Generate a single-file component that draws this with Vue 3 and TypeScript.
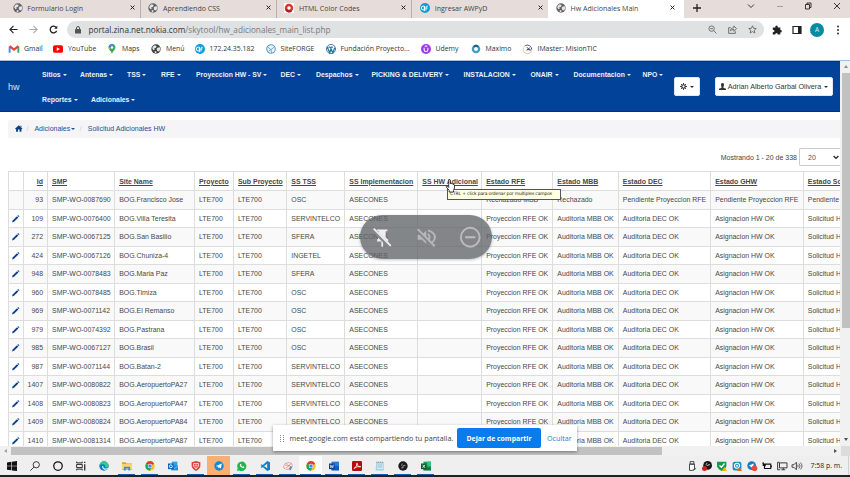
<script setup lang="ts">
interface Tab { title: string; icon: string; active?: boolean }
interface TaskItem { icon: string; state?: string; open?: boolean }
interface Column { label: string; width: number }

const globe = '<circle cx="8" cy="8" r="7.5" fill="#5f6368"/><path d="M3 4l3-2 3 1-1 3-3 1 1 2-2 1-2-3zM10 6l4-1 1 3-2 4-3-1-1-3zM6 11l3 1-1 3-2-1z" fill="#e8e4e2"/>'
const chrome = '<circle cx="8" cy="8" r="7.5" fill="#fbc116"/><path d="M8 8L1.5 4.3A7.5 7.5 0 0 1 14.5 4.3Z" fill="#e33b2e"/><path d="M8 8L1.5 4.3A7.5 7.5 0 0 0 7.5 15.5L11 10Z" fill="#1da462"/><path d="M1.5 4.3A7.5 7.5 0 0 1 14.5 4.3H8z" fill="#e33b2e"/><circle cx="8" cy="8" r="3.6" fill="#fff"/><circle cx="8" cy="8" r="2.8" fill="#4285f4"/>'
const zinaLogo = '<circle cx="8" cy="8" r="8" fill="#0a9fd8"/><path d="M7 5H5a2 2 0 0 0 0 6h2V5v8M9.500 12V7q0-2 3-2M9 8h3" stroke="#fff" stroke-width="1.500" fill="none"/>'

const icons: Record<string, string> = {
  globe,
  globeDark: globe.replace('#5f6368', '#3c4043'),
  chrome,
  zinaLogo,
  htmlCodes: '<rect width="16" height="16" fill="#fff"/><circle cx="8" cy="8" r="4.800" fill="none" stroke="#d9382a" stroke-width="4"/><path d="M3.500 10.500a5 5 0 0 0 8 1.500" stroke="#a3211a" stroke-width="3.500" fill="none"/>',
  gmail: '<path d="M1 14V4" stroke="#4285f4" stroke-width="3"/><path d="M15 14V4" stroke="#34a853" stroke-width="3"/><path d="M1 3.500L8 9l7-5.500" fill="none" stroke="#ea4335" stroke-width="3.500"/>',
  youtube: '<rect y="2" width="16" height="12" rx="3" fill="#f00"/><path d="M6 5l5 3-5 3z" fill="#fff"/>',
  maps: '<path d="M8 0a5.500 5.500 0 0 0-5.500 6C3 10 7 11 8 16c1-5 5-6 5.500-10A5.500 5.500 0 0 0 8 0z" fill="#34a853"/><path d="M3.500 2.500A5.500 5.500 0 0 1 11 1L4 9Q2 6 3.500 2.500z" fill="#4285f4"/><path d="M3 4l3 2-2 3Q2 6 3 4z" fill="#fbbc04"/><path d="M3.500 2.500L6 5l-3 1q-.5-2 .5-3.500z" fill="#ea4335"/><circle cx="8" cy="5.500" r="2" fill="#fff"/>',
  siteforge: '<circle cx="8" cy="8" r="6.800" fill="#eef5fb" stroke="#5b9ac7" stroke-width="1.700"/><path d="M3 5l5 4 5-4M8 9l1 5M4 11l4-2" stroke="#6aa7cf" stroke-width="1.500" fill="none"/>',
  wordpress: '<circle cx="8" cy="8" r="7.300" fill="#fff" stroke="#21759b" stroke-width="1.400"/><path d="M2 5l4 9 2-6 3 6 3-8M4 5h3M8 5h3M7 5l3 8" stroke="#21759b" stroke-width="2" fill="none"/>',
  udemy: '<circle cx="8" cy="8" r="8" fill="#a435f0"/><path d="M5 6v3a3 3 0 0 0 6 0V6M6 4l2-1 2 1" fill="none" stroke="#fff" stroke-width="1.700"/>',
  maximo: '<circle cx="8" cy="8" r="5" fill="none" stroke="#3f9ac4" stroke-width="3.600"/><path d="M4.500 4.500a5 5 0 0 1 7 0" stroke="#1d5f86" stroke-width="3" fill="none"/>',
  imaster: '<path d="M3 3a7 7 0 0 1 11 6" fill="none" stroke="#4a4f73" stroke-width="1.500"/><path d="M14 10A7 7 0 1 1 3 3" fill="none" stroke="#e8b88c" stroke-width="1.300"/><path d="M6 5l6 6M11 6l-5 4M6 9h6" stroke="#4a4f73" stroke-width="1.600"/>',
  windows: '<path d="M0 2.200l7-1V7.500H0zM8 1l8-1v7.500H8zM0 8.500h7v6.300l-7-1zM8 8.500h8V16l-8-1z" fill="#111"/>',
  search: '<circle cx="10" cy="6" r="5" fill="none" stroke="#222" stroke-width="1.400"/><path d="M6.300 9.700L.5 15.500" stroke="#222" stroke-width="1.400"/>',
  cortana: '<circle cx="8" cy="8" r="6.800" fill="none" stroke="#111" stroke-width="2"/>',
  taskview: '<path d="M1 1v2h9V1M1 15v-2h9v2M1 5.500h9v5H1z" fill="none" stroke="#111" stroke-width="1.400"/><path d="M14 1v2M14 5v10" stroke="#111" stroke-width="1.800"/>',
  edge: '<circle cx="8" cy="8" r="7.500" fill="#0b7ec2"/><path d="M.8 7C2-2 15-1 15.500 7c0 4-6 4-6 2 1-1 0-4-3-4Q2 5 .8 7z" fill="#3cc98e"/><path d="M6 8c-1 5 4 6 8 4" stroke="#e9f8fb" stroke-width="1.800" fill="none"/>',
  folder: '<path d="M0 2h6l1.500 2H16v10H0z" fill="#e3a51c"/><path d="M0 5h16v8H0z" fill="#ffd76b"/><path d="M3 15V9h10v6h-3v-3H6v3z" fill="#3b8ed2"/>',
  outlook: '<path d="M6 1h9v10H6z" fill="#28a8ea"/><path d="M5 7h11v8H5z" fill="#1490df"/><path d="M5 8l6 4 5-4" stroke="#8fd3f8" fill="none"/><path d="M0 4h9v9H0z" fill="#0364b8"/><circle cx="4.500" cy="8.500" r="2.300" fill="none" stroke="#fff" stroke-width="1.500"/>',
  brave: '<path d="M1 2l7-2 7 2v6q-1 5-7 8-6-3-7-8z" fill="#d5433c"/><path d="M4 4h8v4l-4 5-4-5z" fill="none" stroke="#ffd8d4" stroke-width="1.400"/><path d="M5 7h6M8 4v8" stroke="#ffd8d4"/>',
  telegram: '<circle cx="8" cy="8" r="7.500" fill="#168acd"/><path d="M3 8l9.500-4-1.500 8-3-2-1.500 1.500V9z" fill="#fff"/>',
  whatsapp: '<path d="M0 16l1-4A7.500 7.500 0 1 1 4 15z" fill="#21b84b"/><path d="M5 4.500q-2 5 5.500 7l1.500-2-2-1.200-1 1Q7 8.500 6.500 7l1-1z" fill="#fff"/>',
  vscode: '<path d="M11.500 0L16 2v12l-4.500 2L1 6.500 2.500 5l9 6.500v-7l-9 6.500L1 9.500z" fill="#1580c8"/>',
  draw: '<ellipse cx="8" cy="8" rx="7" ry="5" fill="#fff0ee" stroke="#df9e98" stroke-width="1.500" transform="rotate(-20 8 8)"/><path d="M4 8q2-4 4-1t4-3M5 11l5-4" stroke="#d97d75" stroke-width="1.300" fill="none"/><path d="M11 8l4 1-3 6-2-2z" fill="#4c92bd"/>',
  word: '<path d="M4 1h12v14H4z" fill="#2b7cd3"/><path d="M4 8h12v7H4z" fill="#185abd"/><path d="M0 4h9v9H0z" fill="#103f91"/><path d="M2 6l1 5 1.500-4L6 11l1-5" stroke="#fff" fill="none"/>',
  acrobat: '<rect width="16" height="16" rx="2" fill="#b50d0d"/><path d="M3 12q5-3 5-8 0-2 0 0 1 6 6 5-6-1-11 3z" fill="none" stroke="#fff" stroke-width="1.300"/>',
  notepad: '<path d="M2 2h12v13H1z" fill="#9dcfdf"/><path d="M3 4h10v9H3z" fill="#d6edf2"/><path d="M4 6h8M4 8h8M4 10h8" stroke="#86b9c9"/><path d="M3 1v2M6 1v2M9 1v2M12 1v2" stroke="#666"/>',
  obs: '<circle cx="8" cy="8" r="7.500" fill="#1b1b1d"/><path d="M7 4q-3 3 1 5M12 7q-4-1-4 2M5 11q4 1 4-2" stroke="#b4b4b4" stroke-width="1.200" fill="none"/>',
  excel: '<path d="M4 1h12v14H4z" fill="#21a366"/><path d="M10 1h6v7h-6z" fill="#33c481"/><path d="M4 10h12v5H4z" fill="#107c41"/><path d="M0 4h9v9H0z" fill="#0b5a2f"/><path d="M2.500 6l4 5M6.500 6l-4 5" stroke="#fff" stroke-width="1.300"/>',
  usb: '<path d="M5 1h6v4H5zM4 5h8v8a3 3 0 0 1-3 2H4z" fill="#fafafa" stroke="#333" stroke-width="1.400"/><path d="M9 14q5 1 5-3" stroke="#333" fill="none"/>',
  obsRec: '<circle cx="9" cy="7" r="7" fill="#171717"/><path d="M8 3q-3 3 1 5M13 6q-4-1-4 2" stroke="#ddd" stroke-width="1.300" fill="none"/><circle cx="4" cy="12" r="4" fill="#d71c1c"/>',
  shieldOk: '<path d="M0 1h15v7q-1 5-7.500 8Q1 13 0 8z" fill="#15994b"/><path d="M4 7l3 3 5-6" stroke="#fff" stroke-width="2" fill="none"/><path d="M12 9l4 7H8z" fill="#f4b400"/>',
  remote: '<rect x="1" y="1" width="14" height="14" rx="3" fill="#1794b4"/><circle cx="8" cy="7.500" r="4" fill="none" stroke="#fff" stroke-width="1.800"/><circle cx="8" cy="7.500" r="1.500" fill="#fff"/><path d="M12 9l4 7H8z" fill="#ef6030"/>',
  telegramBadge: '<circle cx="7.500" cy="7.500" r="7" fill="#1680bd"/><path d="M3 7l8-3-2 7-3-2z" fill="#fff"/><circle cx="12" cy="11.500" r="4.500" fill="#e84936"/>',
  battery: '<path d="M4 5h10v7H4zM15 7v3M1 3l4 6M2 2v5h4" fill="none" stroke="#111" stroke-width="1.800"/>',
  network: '<path d="M4 3h12v8H4zM10 11v3M7 14h6M1 2v12h4M1 2h3" fill="none" stroke="#222" stroke-width="1.400"/>',
  speaker: '<path d="M0 6h3l4-4v12l-4-4H0z" fill="none" stroke="#222" stroke-width="1.300"/><path d="M9 6q2 2 0 4M11 4q4 4 0 8M13.500 2.500q5 5.500 0 11" stroke="#333" stroke-width="1.200" fill="none"/>',
}

const tabs: Tab[] = [
  { title: 'Formulario Login', icon: 'globe' },
  { title: 'Aprendiendo CSS', icon: 'globe' },
  { title: 'HTML Color Codes', icon: 'htmlCodes' },
  { title: 'Ingresar AWPyD', icon: 'zinaLogo' },
  { title: 'Hw Adicionales Main', icon: 'globe', active: true },
]

const bookmarks: Tab[] = [
  { title: 'Gmail', icon: 'gmail' },
  { title: 'YouTube', icon: 'youtube' },
  { title: 'Maps', icon: 'maps' },
  { title: 'Menú', icon: 'globeDark' },
  { title: '172.24.35.182', icon: 'zinaLogo' },
  { title: 'SiteFORGE', icon: 'siteforge' },
  { title: 'Fundación Proyecto...', icon: 'wordpress' },
  { title: 'Udemy', icon: 'udemy' },
  { title: 'Maximo', icon: 'maximo' },
  { title: 'IMaster: MisionTIC', icon: 'imaster' },
]

const menu = ['Sitios', 'Antenas', 'TSS', 'RFE', 'Proyeccion HW - SV', 'DEC', 'Despachos', 'PICKING & DELIVERY', 'INSTALACION', 'ONAIR', 'Documentacion', 'NPO']
const submenu = ['Reportes', 'Adicionales']

const columns: Column[] = [
  { label: '', width: 15.5 },
  { label: 'Id', width: 24 },
  { label: 'SMP', width: 67.2 },
  { label: 'Site Name', width: 79.8 },
  { label: 'Proyecto', width: 39 },
  { label: 'Sub Proyecto', width: 53.3 },
  { label: 'SS TSS', width: 58 },
  { label: 'SS Implementacion', width: 73 },
  { label: 'SS HW Adicional', width: 63.900 },
  { label: 'Estado RFE', width: 71.2 },
  { label: 'Estado MBB', width: 65.5 },
  { label: 'Estado DEC', width: 92.3 },
  { label: 'Estado GHW', width: 92.6 },
  { label: 'Estado Solicitud', width: 90 },
]
const gridColumns = columns.map((c) => c.width + 'px').join(' ')

const sites: [string, string, string, string][] = [
  ['93', '0087690', 'Francisco Jose', 'OSC'],
  ['109', '0076400', 'Villa Teresita', 'SERVINTELCO'],
  ['272', '0067125', 'San Basilio', 'SFERA'],
  ['424', '0067126', 'Chuniza-4', 'INGETEL'],
  ['948', '0078483', 'Maria Paz', 'SFERA'],
  ['960', '0078485', 'Timiza', 'OSC'],
  ['969', '0071142', 'El Remanso', 'OSC'],
  ['979', '0074392', 'Pastrana', 'OSC'],
  ['985', '0067127', 'Brasil', 'OSC'],
  ['987', '0071144', 'Batan-2', 'SERVINTELCO'],
  ['1407', '0080822', 'AeropuertoPA27', 'SERVINTELCO'],
  ['1408', '0080823', 'AeropuertoPA47', 'SERVINTELCO'],
  ['1409', '0080824', 'AeropuertoPA84', 'SERVINTELCO'],
  ['1410', '0081314', 'AeropuertoPA87', 'SERVINTELCO'],
]
const rows = sites.map(([id, smp, site, tss], i) => {
  const states = i === 0
    ? ['Rechazado MBB', 'Rechazado', 'Pendiente Proyeccion RFE', 'Pendiente Proyeccion RFE', 'Pendiente Proyeccion']
    : ['Proyeccion RFE OK', 'Auditoria MBB OK', 'Auditoria DEC OK', 'Asignacion HW OK', 'Solicitud HW OK']
  return { editable: i > 0, cells: [id, 'SMP-WO-' + smp, 'BOG.' + site, 'LTE700', 'LTE700', tss, 'ASECONES', '', ...states] }
})

const tasks: TaskItem[] = [
  { icon: 'windows' }, { icon: 'search' }, { icon: 'cortana' }, { icon: 'taskview' }, { icon: 'edge' },
  { icon: 'folder', open: true }, { icon: 'chrome', open: true }, { icon: 'outlook' },
  { icon: 'brave', open: true }, { icon: 'telegram', state: 'alert' }, { icon: 'whatsapp', open: true },
  { icon: 'vscode', open: true }, { icon: 'draw', open: true }, { icon: 'chrome', state: 'current', open: true },
  { icon: 'word', open: true }, { icon: 'acrobat', open: true }, { icon: 'notepad', open: true },
  { icon: 'obs', open: true }, { icon: 'excel', open: true },
]
const tray = ['usb', 'obsRec', 'shieldOk', 'remote', 'telegramBadge', 'battery', 'network', 'speaker']
</script>

<template>
  <div class="screen">
    <header class="tabstrip">
      <div v-for="t in tabs" :key="t.title" class="tab" :class="{ active: t.active }">
        <svg class="ic" viewBox="0 0 16 16" v-html="icons[t.icon]" />
        <span class="tab-title">{{ t.title }}</span>
        <svg class="x" viewBox="0 0 6 6"><path d="M.7.7l4.600 4.600M5.300.7L.7 5.300" /></svg>
      </div>
      <svg class="plus" viewBox="0 0 8 8"><path d="M4 0v8M0 4h8" /></svg>
      <div class="window-buttons">
        <svg viewBox="0 0 8 8"><path d="M1 2.500l3 3 3-3" /></svg>
        <svg viewBox="0 0 8 8"><path d="M1 4.500h6" stroke="#999" /></svg>
        <svg viewBox="0 0 8 8"><path d="M1.500 2.500h4v4.500h-4zM3 2.500V1h4v4.500H5.500" /></svg>
        <svg viewBox="0 0 8 8"><path d="M1 1l6 6M7 1L1 7" /></svg>
      </div>
    </header>

    <div class="toolbar">
      <svg class="nav-ic" viewBox="0 0 10 10"><path d="M9.500 5H1M5 1L1 5l4 4" stroke="#222" /></svg>
      <svg class="nav-ic" viewBox="0 0 10 10"><path d="M.5 5H9M5 1l4 4-4 4" stroke="#aaa" /></svg>
      <svg class="nav-ic" viewBox="0 0 10 10"><path d="M8.500 6.300A3.700 3.700 0 1 1 8 2.800" stroke="#222" stroke-width="1.400" /><path d="M9.200.8v3.500H5.700z" fill="#222" /></svg>
      <div class="omnibox">
        <svg class="lock" viewBox="0 0 6 8"><path d="M1.500 3.500V2a1.500 1.500 0 0 1 3 0v1.500" fill="none" stroke="#555" /><rect y="3" width="6" height="4.500" rx=".6" fill="#555" /></svg>
        <span class="url"><b>portal.zina.net.nokia.com</b>/skytool/hw_adicionales_main_list.php</span>
        <div class="omni-actions">
          <svg viewBox="0 0 10 10"><circle cx="4" cy="4" r="3" /><path d="M6.200 6.200L9.300 9.300M2.500 4h3" /></svg>
          <svg viewBox="0 0 10 10"><path d="M3 3H.7v6.300h7.500V7M2.500 6.500q.5-3.500 4-3.500V1l3 3-3 3V5Q4 5 2.500 6.500z" /></svg>
          <svg viewBox="0 0 10 10"><path d="M5 .9l1.200 2.800 3 .2-2.300 2 .7 3L5 7.300 2.400 8.900l.7-3-2.300-2 3-.2z" /></svg>
        </div>
      </div>
      <svg class="t-ic" viewBox="0 0 10 10"><path d="M.8 2.500h2.500Q3 .5 4.500.5T5.800 2.500h2.500V5q1.500-.2 1.500 1.200T8.300 7.500v2H5.800q0-1.500-1.300-1.500T3.300 9.500H.8V7.200Q2.500 7 2.500 6T.8 4.800z" fill="#222" /></svg>
      <svg class="t-ic" viewBox="0 0 10 10"><path d="M1 1.500h8v7H1zM7.500 1.500v7" fill="none" stroke="#222" stroke-width="1.200" /><path d="M6 1.500h3v7H6z" fill="#222" /></svg>
      <span class="avatar">A</span>
      <svg class="dots" viewBox="0 0 4 10"><circle cx="2" cy="1.500" r="1" /><circle cx="2" cy="5" r="1" /><circle cx="2" cy="8.500" r="1" /></svg>
    </div>

    <div class="bookmarks">
      <div v-for="b in bookmarks" :key="b.title" class="bookmark">
        <svg class="ic" viewBox="0 0 16 16" v-html="icons[b.icon]" />
        <span>{{ b.title }}</span>
      </div>
    </div>

    <div class="viewport">
      <main class="page">
        <nav class="navbar">
          <span class="brand">hw</span>
          <div class="menus">
            <div class="menu"><a v-for="m in menu" :key="m">{{ m }}<i class="caret" /></a></div>
            <div class="menu second"><a v-for="m in submenu" :key="m">{{ m }}<i class="caret" /></a></div>
          </div>
          <button class="btn gear">
            <svg viewBox="0 0 12 12"><circle cx="6" cy="6" r="3" fill="none" stroke="#333" stroke-width="2" /><path d="M6 0v3M6 9v3M0 6h3M9 6h3M1.800 1.800l2 2M8.200 8.200l2 2M10.200 1.800l-2 2M3.800 8.200l-2 2" stroke="#333" stroke-width="1.600" /></svg><i class="caret" />
          </button>
          <button class="btn user">
            <svg viewBox="0 0 12 12"><path d="M6 0c2 0 2.700 1.500 2.500 3.500S7.500 7 7.500 8L12 10v2H0v-2l4.500-2c0-1-.8-2.500-1-4.500S4 0 6 0z" fill="#333" /></svg>
            <span>Adrian Alberto Garbal Olivera</span><i class="caret" />
          </button>
        </nav>

        <div class="breadcrumb">
          <svg viewBox="0 0 14 12"><path d="M7 0l7 6.500-1 1L12 6.700V12H8.500V8h-3v4H2V6.700L1 7.500l-1-1zM10 1h2v3l-2-2z" fill="#0a3f8c" /></svg>
          <span class="slash">/</span><a>Adicionales<i class="caret" /></a>
          <span class="slash">/</span><a>Solicitud Adicionales HW</a>
        </div>

        <div class="pager">
          <span>Mostrando 1 - 20 de 338</span>
          <div class="select"><span>20</span><svg viewBox="0 0 6 5"><path d="M.6 1l2.400 2.400L5.400 1" fill="none" stroke="#222" stroke-width="1.300" /></svg></div>
        </div>

        <div class="table">
          <div class="tr head" :style="{ gridTemplateColumns: gridColumns }">
            <div v-for="(c, i) in columns" :key="i" class="td" :class="{ num: i === 1 }"><span>{{ c.label }}</span></div>
          </div>
          <div v-for="r in rows" :key="r.cells[0]" class="tr" :style="{ gridTemplateColumns: gridColumns }">
            <div class="td edit"><svg v-if="r.editable" viewBox="0 0 8 8"><path d="M0 8l.7-2.200L5.300 1.200l1.500 1.500L2.200 7.300z" fill="#0b408d" /><path d="M5.800.7l.7-.7L8 1.500l-.7.700z" fill="#0b408d" /></svg></div>
            <div v-for="(c, i) in r.cells" :key="i" class="td" :class="{ num: i === 0 }"><span>{{ c }}</span></div>
          </div>
        </div>
      </main>
      <aside class="vscroll"><i class="up" /><div class="vthumb" /><i class="down" /></aside>
    </div>
    <div class="hscroll"><i class="left" /><div class="hthumb" /><i class="right" /><div class="corner" /></div>

    <footer class="taskbar">
      <div v-for="(t, i) in tasks" :key="i" class="task" :class="[t.state, { open: t.open }]">
        <svg viewBox="0 0 16 16" v-html="icons[t.icon]" />
      </div>
      <div class="tray">
        <svg v-for="t in tray" :key="t" viewBox="0 0 16 16" v-html="icons[t]" />
        <time>7:58 p. m.</time>
      </div>
    </footer>

    <div class="tooltip">CTRL + click para ordenar por multiples campos</div>
    <svg class="cursor" viewBox="0 0 10 14"><path d="M3.200 8.500V1.300q.8-1.300 1.600 0v3.500l.3-.6q.9-.3 1.200.7.900-.5 1.300.5 1.200-.3 1.400.8V9L8 11.500V13H3.700v-1.500L.6 7.800q.5-1.300 1.500-.4z" fill="#fff" stroke="#111" stroke-width=".8" /></svg>

    <div class="pip">
      <svg viewBox="0 0 24 24"><path d="M6 3h12v2h-2v7l3 3v2h-6v6h-2v-6H6v-2l2-3V5H6z" fill="#eee" /><path d="M1 3l20 20" stroke="#85888b" stroke-width="4.500" /><path d="M2 2l20 20" stroke="#eee" stroke-width="2.200" /></svg>
      <svg viewBox="0 0 24 24"><path d="M2 9h5l5-5v16l-5-5H2z" fill="#b5b7b9" /><path d="M14 8q4 4 0 8M14 4q9 3 8 9-1 5-7 7" fill="none" stroke="#b5b7b9" stroke-width="2.300" /><path d="M1 4l20 20" stroke="#85888b" stroke-width="3" /><path d="M2 2.500l20 20" stroke="#b5b7b9" stroke-width="2.200" /></svg>
      <svg viewBox="0 0 24 24"><circle cx="12" cy="12" r="11" fill="none" stroke="#b9bbbd" stroke-width="2.300" /><path d="M6 12h12" stroke="#b9bbbd" stroke-width="2.500" /></svg>
    </div>

    <div class="share">
      <i class="grip" />
      <span class="share-text">meet.google.com está compartiendo tu pantalla.</span>
      <button class="stop">Dejar de compartir</button>
      <a class="hide">Ocultar</a>
    </div>
  </div>
</template>

<style>
body { margin: 0; overflow: hidden; }
</style>

<style scoped>
.screen { position: relative; width: 850px; height: 477px; overflow: hidden; background: #fff; display: flex; flex-direction: column; font-family: "Open Sans", "Noto Sans", sans-serif; color: #333; }
.screen * { box-sizing: border-box; }
svg { display: block; flex: none; overflow: visible; }
span, a { white-space: nowrap; }
.ic { width: 10px; height: 10px; }
.tabstrip { height: 18px; flex: none; display: flex; background: #e6dcd9; padding-left: 5px; font-size: 7.050px; color: #444; }
.tab { width: 135.800px; height: 18px; display: flex; align-items: center; padding: 0 5px 3px 7.500px; border-right: 1px solid #b9b1af; gap: 4.800px; }
.tab-title { flex: 1; line-height: 10px; }
.tab:nth-child(4) { border-right: 0; }
.tab.active { background: #fff; border: 0; padding-right: 9px; }
.x { width: 5px; height: 5px; stroke: #222; stroke-width: 1.200; }
.plus { width: 8px; height: 8px; margin: 3.500px 0 0 9px; stroke: #222; stroke-width: 1.300; }
.window-buttons { margin-left: auto; display: flex; gap: 20.600px; padding: 1.500px 9px 0 0; }
.window-buttons svg { width: 8px; height: 8px; fill: none; stroke: #222; stroke-width: .9; }
.toolbar { height: 22px; flex: none; display: flex; align-items: center; padding: 1px 10px 0 9px; }
.nav-ic { width: 9px; height: 9px; margin-right: 11px; fill: none; stroke-width: 1.200; }
.nav-ic:nth-child(3) { margin-right: 9px; }
.omnibox { width: 697px; height: 17px; margin-right: 8px; border-radius: 9px; background: #dfe1e3; display: flex; align-items: center; padding: 0 7px 0 8px; }
.lock { width: 6px; height: 8px; margin-right: 7.500px; }
.url { font-size: 8.200px; line-height: 12px; color: #777b80; }
.url b { font-weight: 400; color: #333; }
.omni-actions { margin-left: auto; display: flex; gap: 11px; }
.omni-actions svg { width: 9px; height: 9px; fill: none; stroke: #666; stroke-width: 1; }
.t-ic { width: 10px; height: 10px; margin-right: 10px; }
.avatar { width: 14px; height: 14px; border-radius: 50%; background: #078ba3; color: #d9f4f7; font-size: 6.500px; line-height: 14px; text-align: center; margin-right: 12px; margin-left: -2px; }
.dots { width: 4px; height: 10px; fill: #333; }
.bookmarks { height: 20px; flex: none; padding: 0 0 2px 9px; display: grid; grid-template-columns: 44px 54px 44px 43.500px 71px 60px 95px 50px 52px 90px; align-items: center; font-size: 6.900px; color: #333; }
.bookmark { display: flex; align-items: center; gap: 5px; line-height: 10px; }
.viewport { height: 386px; flex: none; display: flex; border-top: 1px solid #a9bede; font-family: "Liberation Sans", Arial, sans-serif; }
.page { width: 840px; overflow: hidden; }
.caret { display: inline-block; border: 2px solid transparent; border-top-color: currentColor; border-bottom: 0; margin-left: 2px; vertical-align: 1px; }
.navbar { height: 51px; background: #024298; border-top: 1px solid #01337f; border-bottom: 1px solid #01337f; display: flex; align-items: center; color: #fff; }
.brand { width: 42px; padding-left: 8px; font-size: 9px; color: #dce8f8; }
.menus { width: 631.500px; align-self: stretch; padding-top: 7px; font-size: 6.850px; font-weight: 700; color: #eaf1fa; }
.menu { display: grid; grid-template-columns: 38px 47px 34px 35px 84.500px 35.500px 55.500px 92px 67px 43px 69px 30px; height: 25px; line-height: 12px; }
.menu.second { grid-template-columns: 49px 60px; }
.btn { flex: none; height: 19px; background: #fff; border: 1px solid #e3e8f0; border-radius: 2px; display: flex; align-items: center; justify-content: center; padding: 0; font: 7.200px "Liberation Sans", Arial, sans-serif; color: #333; }
.btn .caret { flex: none; width: 4px; height: 2px; margin-left: 2.500px; border-width: 2px; border-bottom: 0; }
.btn svg { width: 7px; height: 7px; }
.gear { width: 26.500px; }
.user { width: 118px; margin-left: 14.500px; }
.user span { margin-left: 1.500px; }
.breadcrumb { margin: 8px 0 0 8px; height: 18px; background: #f5f4f6; border-radius: 2px; display: flex; align-items: center; padding: 0 7px 1px; font-size: 7px; color: #234f91; }
.breadcrumb svg { width: 7.500px; height: 7px; margin-right: 4px; }
.breadcrumb .caret { margin-left: 1px; }
.slash { color: #ccc; margin-right: 6px; }
a + .slash { margin-left: 4.500px; }
.pager { height: 19px; margin: 9.500px 0 4.500px; display: flex; align-items: center; justify-content: flex-end; font-size: 7px; color: #444; gap: 2px; }
.select { width: 41px; height: 18px; border: 1px solid #ccc; border-right: 0; border-radius: 2px 0 0 2px; display: flex; align-items: center; justify-content: space-between; padding: 0 1px 0 8px; color: #555; }
.select svg { width: 6px; height: 5px; }
.table { width: 885px; margin-left: 7.500px; border-left: 1px solid #ddd; font-size: 6.950px; color: #484848; }
.tr { display: grid; height: 18.500px; border-bottom: 1px solid #ddd; background: #fff; }
.tr:nth-child(even) { background: #f9f9f9; }
.head { height: 20px; border-top: 1px solid #ddd; font-weight: 700; text-decoration: underline; }
.td { border-right: 1px solid #ddd; padding-left: 4px; display: flex; align-items: center; overflow: hidden; }
.td.num { justify-content: flex-end; padding: 0 4px 0 0; }
.edit { padding-left: 3.500px; }
.edit svg { width: 7.500px; height: 7.500px; }
.vscroll { width: 10px; background: #f1f1f1; display: flex; flex-direction: column; align-items: center; padding: 4px 0 0 1px; }
.vthumb { width: 8px; height: 255px; background: #c1c1c1; margin-top: 5px; }
.up { border: 2.500px solid transparent; border-top: 0; border-bottom: 3px solid #8b8b8b; }
.down { margin-top: auto; margin-bottom: 5px; border: 2.500px solid transparent; border-bottom: 0; border-top: 3px solid #505050; }
.hscroll { height: 10px; flex: none; background: #f1f1f1; display: flex; align-items: center; padding-left: 4px; }
.left { border: 2.500px solid transparent; border-left: 0; border-right: 3px solid #a3a3a3; }
.hthumb { width: 651px; height: 8px; background: #c1c1c1; margin-left: 4px; }
.right { margin-left: auto; border: 2.500px solid transparent; border-right: 0; border-left: 3px solid #505050; }
.corner { width: 9px; height: 10px; background: #dcdcdc; margin-left: 4px; }
.taskbar { height: 21px; flex: none; background: #f0eff0; border-bottom: 2px solid #202025; display: flex; }
.task { width: 23px; height: 19px; display: flex; align-items: center; justify-content: center; }
.task svg { width: 10px; height: 10px; }
.task.open { background: linear-gradient(#135fa8, #135fa8) center bottom / 17px 1.500px no-repeat; }
.task.alert { background: #f9ae72; }
.task.current { background: linear-gradient(#135fa8, #135fa8) center bottom / 21px 1.500px no-repeat, #fbfbfb; }
.tray { margin-left: auto; margin-right: 1px; padding-right: 6px; border-right: 1px solid #d0d0d0; display: flex; align-items: center; gap: 5px; font-size: 6.900px; color: #222; }
.tray svg { width: 10px; height: 10px; }
time { margin-left: 4px; white-space: nowrap; }
.tooltip { position: absolute; left: 447px; top: 189px; width: 114px; height: 10.500px; border: 1px solid #555; background: #ffffe1; font: 4.500px/8.500px "DejaVu Sans", sans-serif; color: #222; white-space: nowrap; padding-left: 2px; letter-spacing: -.15px; }
.cursor { position: absolute; left: 444.500px; top: 179px; width: 11px; height: 14px; }
.pip { position: absolute; left: 360px; top: 215px; width: 132px; height: 44px; border-radius: 22px; background: rgba(95, 99, 102, .77); display: flex; align-items: center; justify-content: center; gap: 23.500px; box-shadow: 0 1px 3px rgba(0, 0, 0, .25); }
.pip svg { width: 20.500px; height: 20.500px; }
.share { position: absolute; left: 273px; top: 425px; width: 304px; height: 26px; background: #fff; box-shadow: 0 1px 3px rgba(0, 0, 0, .4); display: flex; align-items: center; padding-left: 7px; font-size: 7.250px; }
.grip { width: 4px; height: 7px; border-left: 1px dotted #888; border-right: 1px dotted #888; margin-right: 5.500px; }
.share-text { width: 167.500px; flex: none; color: #444; }
.stop { flex: none; width: 84px; height: 20px; border: 0; border-radius: 2px; background: #087bed; color: #fff; padding: 0; font: 700 6.900px "Open Sans", sans-serif; }
.hide { margin-left: 6px; color: #2b7fd0; font-size: 7.200px; }
</style>
